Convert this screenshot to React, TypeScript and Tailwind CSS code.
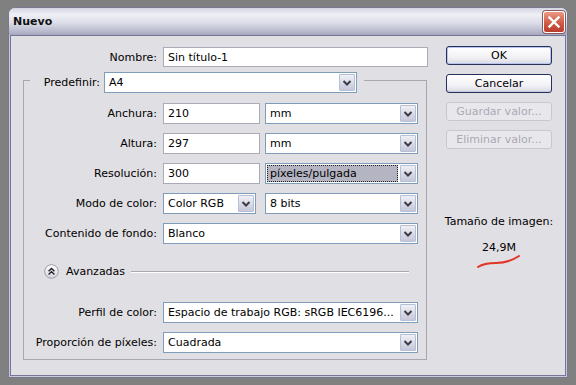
import React from 'react';

function Chevron() {
  return (
    <svg width="14" height="17" viewBox="0 0 14 17">
      <path d="M3.5 7 L7 10.5 L10.5 7" fill="none" stroke="#3c3c48" strokeWidth="2" />
    </svg>
  );
}

function Select({ value, w, focus }: { value: string; w: string; focus?: boolean }) {
  return (
    <div className={`flex h-[21px] ${w} items-stretch border border-[#7f9db9] bg-white p-[1px]`}>
      <div className="flex min-w-0 flex-1 items-stretch pr-[2px]">
        {focus ? (
          <div className="flex flex-1 items-center border border-dotted border-[#202020] bg-[#b4b4c2] pl-[2px]">
            {value}
          </div>
        ) : (
          <div className="flex flex-1 items-center overflow-hidden whitespace-nowrap pl-[3px]">{value}</div>
        )}
      </div>
      <span className="flex w-[16px] items-center justify-center rounded-[1px] border border-[#b3c0d6] bg-gradient-to-b from-[#f0f0f6] to-[#c6c7d8]">
        <Chevron />
      </span>
    </div>
  );
}

function TextBox({ value, w, h = 'h-[21px]' }: { value: string; w: string; h?: string }) {
  return (
    <div className={`flex ${h} ${w} items-center border border-[#a7acb6] bg-white pl-[4px]`}>{value}</div>
  );
}

function Row({ label, children }: { label: string; children: React.ReactNode }) {
  return (
    <div className="flex h-[21px] items-center gap-[6px]">
      <span className="w-[133px] text-right">{label}</span>
      {children}
    </div>
  );
}

function Button({ label, disabled, main }: { label: string; disabled?: boolean; main?: boolean }) {
  if (disabled) {
    return (
      <div className="flex h-[19px] w-[106px] items-center justify-center rounded-[3px] border border-[#c8c7d0] bg-[#e8e8ec] text-[#aaa9b4]">
        {label}
      </div>
    );
  }
  return (
    <div
      className={`flex h-[19px] w-[106px] items-center justify-center rounded-[3px] border border-[#26305c] bg-[linear-gradient(to_bottom,#ffffff,#f2f2f6_60%,#d9d9e5)] text-black ${
        main ? 'shadow-[inset_0_0_0_1px_#b9c4ea]' : 'shadow-[inset_0_-1px_0_#c8c8d8]'
      }`}
    >
      {label}
    </div>
  );
}

export default function App() {
  return (
    <div className="h-[385px] w-[576px] bg-[#808080] pl-[8px] pt-[7px] font-['DejaVu_Sans',Tahoma,sans-serif] text-[11px] leading-[13px] text-black">
      <div className="flex h-[371px] w-[560px] flex-col rounded-t-[7px] border border-[#77778f] bg-[#c9cad8]">
        {/* title bar */}
        <div className="flex h-[27px] items-center justify-between rounded-t-[6px] bg-[linear-gradient(to_bottom,#d4d5e3_0%,#efeff5_25%,#dcdde8_55%,#babbce_85%,#a5a6bd_100%)] pl-[4px] pr-[2px]">
          <span className="font-bold text-[#111]">Nuevo</span>
          <div className="flex h-[22px] w-[22px] items-center justify-center rounded-[3px] border border-white bg-[linear-gradient(to_bottom,#eb9a86,#d2604a_50%,#b83b2b)] shadow-[0_0_0_1px_#8a5a5a]">
            <svg width="14" height="14" viewBox="0 0 14 14">
              <path d="M2.5 2.5 L11.5 11.5 M11.5 2.5 L2.5 11.5" stroke="white" strokeWidth="2.4" strokeLinecap="square" />
            </svg>
          </div>
        </div>

        <div className="flex flex-1 px-[1px] pb-[1px]">
          <div className="flex flex-1 border border-[#75759a] bg-[#e0dfe3]">
            {/* left column */}
            <div className="flex w-[417px] flex-col pt-[11px]">
              <div className="flex h-[20px] items-center gap-[6px]">
                <span className="w-[146px] text-right">Nombre:</span>
                <TextBox value="Sin título-1" w="w-[265px]" h="h-[20px]" />
              </div>

              <fieldset className="ml-[12px] mt-[1px] w-[404px] border border-[#a9a8b2] pb-[6px]">
                <legend className="ml-[6px] pr-[7px] pt-[4px]">
                  <div className="flex items-center">
                    <span className="w-[74px] pr-[4px] text-right">Predefinir:</span>
                    <Select value="A4" w="w-[253px]" />
                  </div>
                </legend>

                <div className="mt-[10px] flex flex-col gap-[9px]">
                  <Row label="Anchura:">
                    <TextBox value="210" w="w-[97px]" />
                    <div className="ml-[-1px]">
                      <Select value="mm" w="w-[153px]" />
                    </div>
                  </Row>
                  <Row label="Altura:">
                    <TextBox value="297" w="w-[97px]" />
                    <div className="ml-[-1px]">
                      <Select value="mm" w="w-[153px]" />
                    </div>
                  </Row>
                  <Row label="Resolución:">
                    <TextBox value="300" w="w-[97px]" />
                    <div className="ml-[-1px]">
                      <Select value="píxeles/pulgada" w="w-[153px]" focus />
                    </div>
                  </Row>
                  <Row label="Modo de color:">
                    <Select value="Color RGB" w="w-[93px]" />
                    <div className="ml-[3px]">
                      <Select value="8 bits" w="w-[153px]" />
                    </div>
                  </Row>
                  <Row label="Contenido de fondo:">
                    <Select value="Blanco" w="w-[255px]" />
                  </Row>
                </div>

                <div className="mt-[20px] flex h-[15px] items-center pl-[20px] pr-[17px]">
                  <svg width="15" height="15" viewBox="0 0 15 15">
                    <defs>
                      <linearGradient id="av" x1="0" y1="0" x2="0" y2="1">
                        <stop offset="0" stopColor="#ffffff" />
                        <stop offset="1" stopColor="#d3d3dc" />
                      </linearGradient>
                    </defs>
                    <circle cx="7.5" cy="7.5" r="6.8" fill="url(#av)" stroke="#9c9caa" />
                    <path d="M4.6 7.2 L7.5 4.4 L10.4 7.2 M4.6 10.4 L7.5 7.6 L10.4 10.4" fill="none" stroke="#1e1e28" strokeWidth="1.4" />
                  </svg>
                  <span className="ml-[7px]">Avanzadas</span>
                  <div className="ml-[6px] h-[2px] flex-1 border-b border-t border-b-white border-t-[#a9a8b2]" />
                </div>

                <div className="mt-[23px] flex flex-col gap-[9px]">
                  <Row label="Perfil de color:">
                    <Select value="Espacio de trabajo RGB: sRGB IEC6196..." w="w-[255px]" />
                  </Row>
                  <Row label="Proporción de píxeles:">
                    <Select value="Cuadrada" w="w-[255px]" />
                  </Row>
                </div>
              </fieldset>
            </div>

            {/* right column */}
            <div className="ml-[18px] flex w-[106px] flex-col items-center pt-[10px]">
              <div className="flex flex-col gap-[9px]">
                <Button label="OK" main />
                <Button label="Cancelar" />
                <Button label="Guardar valor..." disabled />
                <Button label="Eliminar valor..." disabled />
              </div>
              <div className="mt-[66px] whitespace-nowrap">Tamaño de imagen:</div>
              <div className="mt-[13px]">24,9M</div>
              <svg width="46" height="16" viewBox="0 0 46 16" className="mt-[-1px]">
                <path d="M2 14 C8 10 14 10 20 10 S34 9 43 3" fill="none" stroke="#e3342a" strokeWidth="2" strokeLinecap="round" />
              </svg>
            </div>
          </div>
        </div>
      </div>
    </div>
  );
}
